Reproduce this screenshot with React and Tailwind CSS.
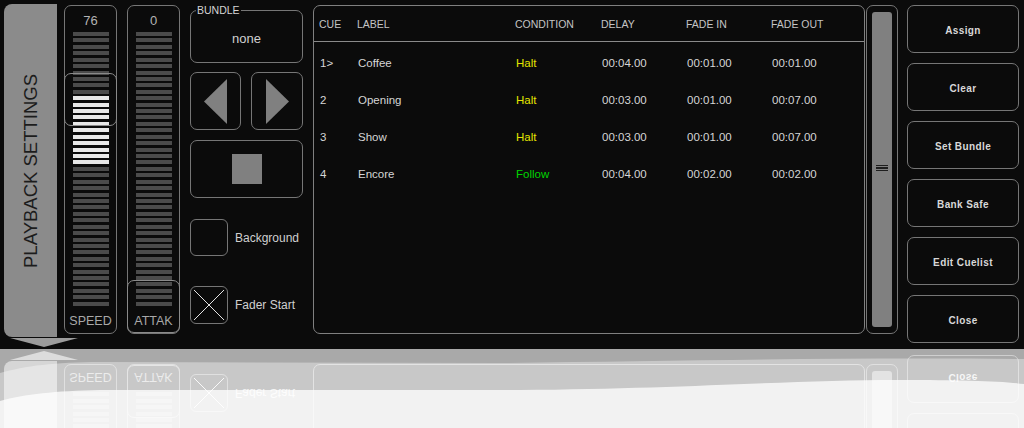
import React from "react";

const cues = [
  { cue: "1>", label: "Coffee", cond: "Halt", delay: "00:04.00", fadeIn: "00:01.00", fadeOut: "00:01.00" },
  { cue: "2", label: "Opening", cond: "Halt", delay: "00:03.00", fadeIn: "00:01.00", fadeOut: "00:07.00" },
  { cue: "3", label: "Show", cond: "Halt", delay: "00:03.00", fadeIn: "00:01.00", fadeOut: "00:07.00" },
  { cue: "4", label: "Encore", cond: "Follow", delay: "00:04.00", fadeIn: "00:02.00", fadeOut: "00:02.00" },
];

const sideButtons = ["Assign", "Clear", "Set Bundle", "Bank Safe", "Edit Cuelist", "Close"];

const bars = Array.from({ length: 43 }, (_, i) => i);

function Fader({ value, label, litFrom = -1, litTo = -1, knobTop }) {
  return (
    <div className="relative mt-[5px] flex h-[329px] w-[53px] shrink-0 flex-col items-center rounded-[7px] border border-[#767676]">
      <div className="mt-[8px] h-[14px] text-[13px] leading-[14px] text-[#b4b4b4]">{value}</div>
      <div className="mt-[4px] flex h-[274px] flex-col justify-between">
        {bars.map((i) => (
          <div
            key={i}
            className={i >= litFrom && i <= litTo ? "h-[4px] w-[36px] bg-[#e8e8e8]" : "h-[4px] w-[36px] bg-[#4b4b4b]"}
          />
        ))}
      </div>
      <div className="mt-[8px] text-[12.5px] leading-[14px] text-[#a8a8a8]">{label}</div>
      {/* knob */}
      <div
        className="absolute left-[-1px] right-[-1px] h-[53px] rounded-[7px] border border-[#8a8a8a]"
        style={{ top: knobTop }}
      />
    </div>
  );
}

function Panel() {
  return (
    <div className="flex h-[349px] w-[1024px] items-start bg-[#0b0b0b]">
      {/* side tab */}
      <div className="relative ml-[4px] mt-[4px] flex h-[333px] w-[53px] shrink-0 items-center justify-center rounded-l-[8px] bg-[#8b8b8b]">
        <span className="rotate-180 whitespace-nowrap text-[18.5px] leading-[18px] text-[#1c1c1c] [writing-mode:vertical-rl]">
          PLAYBACK SETTINGS
        </span>
        <div className="absolute left-[6px] top-[334px] h-0 w-0 border-x-[34px] border-t-[9px] border-x-transparent border-t-[#9c9c9c]" />
      </div>

      <div className="ml-[7px] flex gap-[10px]">
        <Fader value="76" label="SPEED" litFrom={10} litTo={20} knobTop={67} />
        <Fader value="0" label="ATTAK" knobTop={274} />
      </div>

      {/* bundle / transport / options */}
      <div className="ml-[10px] flex w-[113px] shrink-0 flex-col">
        <div className="relative mt-[10px] flex h-[53px] items-center justify-center rounded-[7px] border border-[#767676] pt-[4px]">
          <span className="absolute left-[5px] top-[-7px] bg-[#0b0b0b] px-[1px] text-[10.5px] leading-[12px] text-[#d4d4d4]">
            BUNDLE
          </span>
          <span className="text-[13px] text-[#d0d0d0]">none</span>
        </div>
        <div className="mt-[9px] flex h-[58px] gap-[10px]">
          <div className="flex w-[51px] items-center justify-center rounded-[7px] border border-[#767676]">
            <svg width="23" height="45" viewBox="0 0 23 45">
              <polygon points="23,0 0,22.5 23,45" fill="#808080" />
            </svg>
          </div>
          <div className="flex flex-1 items-center justify-center rounded-[7px] border border-[#767676]">
            <svg width="23" height="45" viewBox="0 0 23 45">
              <polygon points="0,0 23,22.5 0,45" fill="#808080" />
            </svg>
          </div>
        </div>
        <div className="mt-[10px] flex h-[58px] items-center justify-center rounded-[7px] border border-[#767676]">
          <div className="h-[30px] w-[30px] bg-[#808080]" />
        </div>
        <div className="mt-[21px] flex items-center gap-[7px]">
          <div className="h-[37px] w-[38px] rounded-[6px] border border-[#767676]" />
          <span className="text-[12px] text-[#d0d0d0]">Background</span>
        </div>
        <div className="mt-[30px] flex items-center gap-[7px]">
          <div className="h-[38px] w-[38px] rounded-[6px] border border-[#767676]">
            <svg width="36" height="36" viewBox="0 0 36 36">
              <line x1="3" y1="3" x2="33" y2="33" stroke="#e4e4e4" strokeWidth="1" />
              <line x1="33" y1="3" x2="3" y2="33" stroke="#e4e4e4" strokeWidth="1" />
            </svg>
          </div>
          <span className="text-[12px] text-[#d0d0d0]">Fader Start</span>
        </div>
      </div>

      {/* cue list */}
      <div className="ml-[10px] mt-[5px] h-[329px] w-[552px] shrink-0 rounded-[7px] border border-[#808080]">
        <div className="grid h-[36px] grid-cols-[38px_158px_86px_85px_85px_1fr] items-center border-b border-[#8a8a8a] pl-[5px] pt-[2px] text-[10.5px] text-[#c4c4c4]">
          <span>CUE</span>
          <span>LABEL</span>
          <span>CONDITION</span>
          <span>DELAY</span>
          <span>FADE IN</span>
          <span>FADE OUT</span>
        </div>
        <div className="pt-[3px]">
          {cues.map((c) => (
            <div
              key={c.cue}
              className="grid h-[37px] grid-cols-[38px_158px_86px_85px_85px_1fr] items-center pl-[6px] text-[11.5px] text-[#d6d6d6]"
            >
              <span>{c.cue}</span>
              <span>{c.label}</span>
              <span className={c.cond === "Follow" ? "text-[#00d400]" : "text-[#e4e400]"}>{c.cond}</span>
              <span>{c.delay}</span>
              <span>{c.fadeIn}</span>
              <span>{c.fadeOut}</span>
            </div>
          ))}
        </div>
      </div>

      {/* scrollbar */}
      <div className="ml-[1px] mt-[5px] flex h-[329px] w-[32px] shrink-0 rounded-[7px] border border-[#767676] px-[5px] py-[6px]">
        <div className="flex flex-1 flex-col items-center justify-center gap-[1px] rounded-[3px] bg-[#808080] pb-[3px]">
          <div className="h-[1.5px] w-[12px] bg-[#1e1e1e]" />
          <div className="h-[1.5px] w-[12px] bg-[#1e1e1e]" />
          <div className="h-[1.5px] w-[12px] bg-[#1e1e1e]" />
        </div>
      </div>

      {/* actions */}
      <div className="ml-[9px] mt-[5px] flex w-[112px] shrink-0 flex-col gap-[10px]">
        {sideButtons.map((b) => (
          <div
            key={b}
            className="flex h-[48px] items-center justify-center rounded-[7px] border border-[#767676] pt-[3px] text-[10px] font-bold tracking-[0.4px] text-[#d8d8d8]"
          >
            {b}
          </div>
        ))}
      </div>
    </div>
  );
}

export default function App() {
  return (
    <div className="h-[428px] w-[1024px] overflow-hidden bg-[#0b0b0b] font-['Liberation_Sans',Arial,sans-serif]">
      <Panel />
      {/* floor reflection */}
      <div className="relative h-[79px] overflow-hidden bg-[#0b0b0b]" aria-hidden="true">
        <div className="absolute left-0 top-[-349px] origin-bottom -scale-y-100">
          <Panel />
        </div>
        <svg className="absolute inset-0 h-full w-full" viewBox="0 0 1024 79" preserveAspectRatio="none">
          <rect width="1024" height="79" fill="#fff" fillOpacity="0.65" />
          <path
            d="M0,24 C25,17 55,13 100,13 L500,14 C680,12 840,8 1024,10 L1024,79 L0,79 Z"
            fill="#fff"
            fillOpacity="0.37"
          />
          <path
            d="M0,52 C25,45 55,42 100,41 L520,41 C680,40 790,31 900,31 C960,31 1000,32 1024,35 L1024,79 L0,79 Z"
            fill="#fff"
            fillOpacity="0.76"
          />
        </svg>
      </div>
    </div>
  );
}
